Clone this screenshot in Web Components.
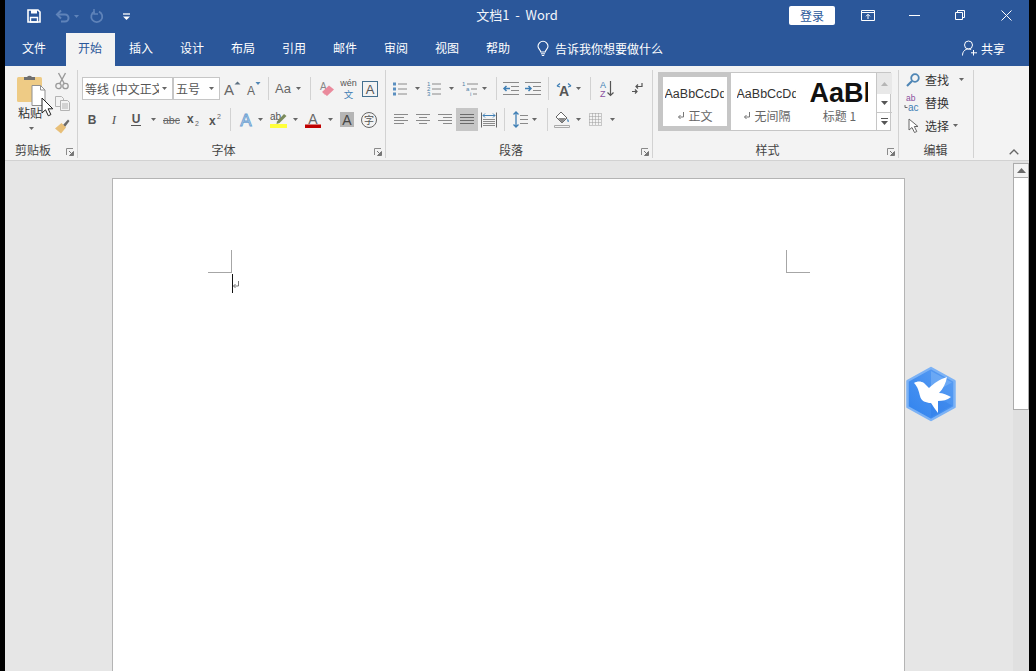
<!DOCTYPE html>
<html lang="zh">
<head>
<meta charset="utf-8">
<title>文档1 - Word</title>
<style>
html,body{margin:0;padding:0;background:#000;overflow:hidden}
body{font-family:"Noto Sans CJK SC","Liberation Sans",sans-serif}
</style>
</head>
<body>
<x-app>
  <x-title-bar title-text="文档1  -  Word"></x-title-bar>
  <x-tab-bar></x-tab-bar>
  <x-ribbon>
    <x-group w="73" label="剪贴板" launcher>
      <x-clipboard></x-clipboard>
    </x-group>
    <x-group w="308" label="字体" launcher>
      <x-row pad="4">
        <x-combo w="91" text="等线 (中文正文)"></x-combo>
        <x-combo w="47" text="五号"></x-combo>
        <x-tool w="24" i="grow"></x-tool><x-tool w="20" i="shrink"></x-tool>
        <x-sep w="8" x="4"></x-sep>
        <x-tool w="24" i="case"></x-tool><x-tool w="4" i="dd"></x-tool>
        <x-sep w="20" x="10"></x-sep>
        <x-tool w="14" i="eraser"></x-tool><x-tool w="28" i="wen"></x-tool><x-tool w="16" i="abox"></x-tool>
      </x-row>
      <x-row pad="3" second>
        <x-tool w="22" i="bold"></x-tool><x-tool w="22" i="italic"></x-tool><x-tool w="22" i="under"></x-tool><x-tool w="12" i="dd"></x-tool>
        <x-tool w="24" i="strike"></x-tool><x-tool w="21" i="sub"></x-tool><x-tool w="22" i="sup"></x-tool>
        <x-sep w="11" x="4"></x-sep>
        <x-tool w="18" i="effect"></x-tool><x-tool w="11" i="dd"></x-tool>
        <x-tool w="26" i="hilite"></x-tool><x-tool w="7" i="dd"></x-tool>
        <x-tool w="28" i="fcolor"></x-tool><x-tool w="6" i="dd"></x-tool>
        <x-tool w="28" i="shade"></x-tool><x-tool w="16" i="enclose"></x-tool>
      </x-row>
    </x-group>
    <x-group w="267" label="段落" launcher>
      <x-row pad="4">
        <x-tool w="20" i="bullets"></x-tool><x-tool w="14" i="dd"></x-tool>
        <x-tool w="20" i="numbers"></x-tool><x-tool w="14" i="dd"></x-tool>
        <x-tool w="24" i="multi"></x-tool><x-tool w="4" i="dd"></x-tool>
        <x-sep w="17" x="10"></x-sep>
        <x-tool w="16" i="outdent"></x-tool><x-tool w="28" i="indent"></x-tool>
        <x-sep w="9" x="1"></x-sep>
        <x-tool w="16" i="asian"></x-tool><x-tool w="12" i="dd"></x-tool>
        <x-sep w="14" x="6"></x-sep>
        <x-tool w="18" i="sort"></x-tool><x-tool w="12"></x-tool><x-tool w="18" i="marks"></x-tool>
      </x-row>
      <x-row pad="4" second>
        <x-tool w="22" i="al"></x-tool><x-tool w="22" i="ac"></x-tool><x-tool w="22" i="ar"></x-tool>
        <x-tool w="22" i="aj" active></x-tool><x-tool w="22" i="ad"></x-tool>
        <x-sep w="9" x="4"></x-sep>
        <x-tool w="22" i="spacing"></x-tool><x-tool w="6" i="dd"></x-tool>
        <x-sep w="14" x="10"></x-sep>
        <x-tool w="22" i="bucket"></x-tool><x-tool w="10" i="dd"></x-tool>
        <x-tool w="24" i="borders"></x-tool><x-tool w="10" i="dd"></x-tool>
      </x-row>
    </x-group>
    <x-group w="246" label="样式" launcher>
      <x-gallery>
        <x-style-item selected name="正文" mark preview="AaBbCcDd"></x-style-item>
        <x-style-item name="无间隔" mark preview="AaBbCcDd"></x-style-item>
        <x-style-item heading name="标题 1" preview="AaBbC"></x-style-item>
      </x-gallery>
    </x-group>
    <x-group w="75" label="编辑">
      <x-edit-list>
        <x-edit-item i="find" text="查找" gap="8"></x-edit-item>
        <x-edit-item i="replace" text="替换"></x-edit-item>
        <x-edit-item i="select" text="选择" gap="2"></x-edit-item>
      </x-edit-list>
    </x-group>
    <x-collapse></x-collapse>
  </x-ribbon>
  <x-doc-area>
    <x-page></x-page>
    <x-scrollbar></x-scrollbar>
    <x-bird></x-bird>
  </x-doc-area>
</x-app>

<script>
const LS='font-family="Liberation Sans"', CJK='font-family="Noto Sans CJK SC"';
const L='#8a8a8a';
const lines=(ys,x1,x2,c=L)=>ys.map(y=>`<path d="M${x1} ${y}H${x2}" stroke="${c}" stroke-width="1"/>`).join('');
const dots=(ys,x)=>ys.map(y=>`<rect x="${x}" y="${y-1.5}" width="3" height="3" fill="#5b8fc0"/>`).join('');
const ICONS={
  dd:[5,3,`<path d="M0 0h5L2.5 3z" fill="#666"/>`],
  save:[14,14,`<path d="M1 1h10l2 2v10H1z" fill="none" stroke="#fff" stroke-width="1.6"/><path d="M4 1h6v3.5H4z" fill="#fff"/><path d="M3.5 8.5h7V13h-7z" fill="none" stroke="#fff" stroke-width="1.4"/>`],
  undo:[14,12,`<path d="M2 4.5h7a3.5 3.5 0 0 1 0 7H5" fill="none" stroke="#5f83b9" stroke-width="2"/><path d="M5 .5 1 4.5l4 4" fill="none" stroke="#5f83b9" stroke-width="2"/>`],
  ddim:[5,3,`<path d="M0 0h5L2.5 3z" fill="#5f83b9"/>`],
  redo:[14,14,`<path d="M9 2.6a5.5 5.5 0 1 1-4.5 0" fill="none" stroke="#5f83b9" stroke-width="1.8"/><path d="M4 0v5h4" fill="none" stroke="#5f83b9" stroke-width="1.5"/>`],
  custom:[7,7,`<path d="M0 1h7" stroke="#fff" stroke-width="1.3"/><path d="M0 3.5h7L3.5 7z" fill="#fff"/>`],
  rdisp:[14,11,`<path d="M.5.5h13v10H.5zM.5 2.5h13" fill="none" stroke="#fff"/><path d="M7 9V4.5M5 6.3 7 4.3l2 2" fill="none" stroke="#fff"/>`],
  min:[11,1,`<path d="M0 .5h11" stroke="#fff"/>`],
  restore:[10,10,`<path d="M.5 2.5h7v7h-7zM2.5 2.5v-2h7v7h-2" fill="none" stroke="#fff"/>`],
  close:[11,11,`<path d="M.5.5l10 10M10.500.5l-10 10" stroke="#fff"/>`],
  bulb:[12,15,`<path d="M3.800 11c0-2-2.800-3-2.800-5.700a5 5 0 0 1 10 0C11 8 8.200 9 8.200 11z" fill="none" stroke="#fff" stroke-width="1.100"/><path d="M4 12.800h4M4.800 14.500h2.400" stroke="#fff"/>`],
  share:[15,16,`<circle cx="6.500" cy="5" r="4" fill="none" stroke="#fff"/><path d="M.5 15.500c0-4 2.500-6.500 6-6.500 1 0 2 .2 2.700.6" fill="none" stroke="#fff"/><path d="M11.500 10v5.500M9 12.800h6" stroke="#fff"/>`],
  paste:[30,33,`<rect x="1" y="4" width="25" height="25" rx="1.500" fill="#eecb85"/><path d="M8 7V4h3a3 3 0 0 1 5 0h3v3z" fill="#6f6f6f"/><path d="M16 12.500h8.500l4.500 4.500v15.500H16z" fill="#fff" stroke="#8f8f8f"/><path d="M24.500 12.500V17H29" fill="none" stroke="#8f8f8f"/>`],
  cut:[14,18,`<path d="M3.500 1l6 11M10.500 1l-6 11" stroke="#9a9a9a" stroke-width="1.400"/><circle cx="3.500" cy="14" r="2.700" fill="none" stroke="#9a9a9a" stroke-width="1.300"/><circle cx="10.500" cy="14" r="2.700" fill="none" stroke="#9a9a9a" stroke-width="1.300"/>`],
  copy:[15,15,`<path d="M.5.500h6l2 2v8H.5z" fill="#f3f3f3" stroke="#b3b3b3"/><path d="M5.500 4.500h7l2 2v8h-9z" fill="#f3f3f3" stroke="#b3b3b3"/>${lines([8,10,12],7,13,'#b3b3b3')}`],
  brush:[16,15,`<path d="M9 6 14 .5l1.500 1.500L11 8z" fill="#6a6a6a"/><path d="M7.500 4 12 8.500 7 14.500 1 9.500z" fill="#e8bf78"/>`],
  launch:[8,8,`<path d="M.5 7V.5H7" fill="none" stroke="#8a8a8a"/><path d="M3 3l3.500 3.500M7.500 3.500v4h-4z" stroke="#777" fill="#777"/>`],
  grow:[17,16,`<text x="0" y="13.500" font-size="15" fill="#666" ${LS}>A</text><path d="M10.500 3.500 13.500.5l3 3z" fill="#5c6f80"/>`],
  shrink:[14,15,`<text x="0" y="13.500" font-size="12" fill="#666" ${LS}>A</text><path d="M8.500 1h5l-2.500 3z" fill="#4f86b5"/>`],
  case:[18,14,`<text x="0" y="10.500" font-size="13" fill="#666" ${LS}>Aa</text>`],
  eraser:[16,16,`<text x="1" y="9" font-size="10" fill="#888" ${LS}>A</text><path d="M3 11 10 4.500l5 4-7 6.500z" fill="#ea8a9c"/><path d="M3 11l3 3" stroke="#f5c8d0"/>`],
  wen:[17,19,`<text x="8.500" y="7" text-anchor="middle" font-size="9" fill="#555" ${LS}>wén</text><text x="8.500" y="18.500" text-anchor="middle" font-size="9.500" fill="#3f7fb5" ${CJK}>文</text>`],
  abox:[16,16,`<rect x=".5" y=".5" width="15" height="15" fill="none" stroke="#44708f"/><text x="8" y="13" text-anchor="middle" font-size="13" fill="#555" ${LS}>A</text>`],
  bold:[10,12,`<text x="5" y="10" text-anchor="middle" font-size="12" font-weight="700" fill="#555" ${LS}>B</text>`],
  italic:[8,12,`<text x="4" y="10" text-anchor="middle" font-size="13" font-style="italic" fill="#555" font-family="Liberation Serif">I</text>`],
  under:[10,14,`<text x="5" y="10" text-anchor="middle" font-size="12" font-weight="700" fill="#555" ${LS}>U</text><path d="M0 12.500h10" stroke="#555"/>`],
  strike:[17,12,`<text x="8.500" y="10" text-anchor="middle" font-size="10.500" fill="#666" ${LS}>abc</text><path d="M0 6.500h17" stroke="#666"/>`],
  sub:[13,13,`<text x="0" y="10" font-size="12" font-weight="700" fill="#555" ${LS}>x</text><text x="8" y="13" font-size="7" fill="#666" ${LS}>2</text>`],
  sup:[13,13,`<text x="0" y="12" font-size="12" font-weight="700" fill="#555" ${LS}>x</text><text x="8" y="6" font-size="7" fill="#666" ${LS}>2</text>`],
  effect:[16,16,`<text x="8" y="14" text-anchor="middle" font-size="17" fill="#dfeaf6" stroke="#6da1d2" stroke-width=".9" ${LS}>A</text>`],
  hilite:[18,17,`<text x="0" y="9" font-size="10" fill="#555" ${LS}>ab</text><path d="M7 10.500 14 3l2.500 2-7 7-3 1z" fill="#7a8a5a"/><rect x="0" y="13" width="17" height="4" fill="#ffff3a"/>`],
  fcolor:[16,16,`<text x="8" y="11.500" text-anchor="middle" font-size="14" fill="#666" ${LS}>A</text><rect x="0" y="12.500" width="16" height="3.500" fill="#c00000"/>`],
  shade:[14,15,`<rect width="14" height="15" fill="#b5b5b5"/><text x="7" y="13" text-anchor="middle" font-size="14" fill="#444" ${LS}>A</text>`],
  enclose:[16,16,`<circle cx="8" cy="8" r="7.500" fill="none" stroke="#666"/><text x="8" y="12" text-anchor="middle" font-size="10" fill="#555" ${CJK}>字</text>`],
  bullets:[14,14,`${dots([2,7,12],0)}${lines([2,7,12],5,14)}`],
  numbers:[14,15,`<g font-size="6" fill="#4f7fa8" ${LS}><text x="0" y="5">1</text><text x="0" y="10">2</text><text x="0" y="15">3</text></g>${lines([3,8,13],5,14)}`],
  multi:[16,15,`<g font-size="6" fill="#4f7fa8" ${LS}><text x="0" y="5">1</text><text x="4" y="10">a</text><text x="8" y="15">i</text></g>${lines([3],5,16)}${lines([8],9,15)}${lines([13],11,15)}`],
  outdent:[16,13,`${lines([.5,12.500],0,16)}${lines([4.500,8.500],8,16)}<path d="M7 6.500H1M3.500 4 1 6.500 3.500 9" fill="none" stroke="#3f7fb5" stroke-width="1.500"/>`],
  indent:[16,13,`${lines([.5,12.500],0,16)}${lines([4.500,8.500],8,16)}<path d="M0 6.500h6M3.500 4 6 6.500 3.500 9" fill="none" stroke="#3f7fb5" stroke-width="1.500"/>`],
  asian:[16,14,`<text x="8" y="13.500" text-anchor="middle" font-size="14" font-weight="700" fill="#555" ${LS}>A</text><path d="M1 4l3-2.500M1 4l3 1M15 4l-3-2.500M15 4l-3 1" stroke="#3f7fb5" stroke-width="1.300" fill="none"/>`],
  sort:[14,17,`<text x="0" y="8" font-size="9" fill="#3f7fb5" ${LS}>A</text><text x="0" y="17" font-size="9" fill="#8a4f9e" ${LS}>Z</text><path d="M10.500 1v14M7.500 12.500l3 3 3-3" fill="none" stroke="#555" stroke-width="1.200"/>`],
  marks:[11,13,`<path d="M10 1v3.500H4M6 2.500 4 4.500l2 2" fill="none" stroke="#555" stroke-width="1.200"/><path d="M0 9.500h5M3 7.500l2 2-2 2" fill="none" stroke="#555" stroke-width="1.200"/>`],
  al:[14,11,lines([.5,6.500],0,14)+lines([3.500,9.500],0,10)],
  ac:[14,11,lines([.5,6.500],0,14)+lines([3.500,9.500],3,11)],
  ar:[14,11,lines([.5,6.500],0,14)+lines([3.500,9.500],5,14)],
  aj:[14,11,lines([.5,3.500,6.500,9.500],0,14,'#6a6a6a')],
  ad:[16,16,`<path d="M.5.5v15M15.500.5v15" stroke="#666"/>${lines([7.500,9.500,11.500,13.500],2,14)}<path d="M2 3.500h12M4 1.500l-2 2 2 2M12 1.500l2 2-2 2" fill="none" stroke="#3f7fb5"/>`],
  spacing:[15,17,`${lines([4.500,8.500,12.500],7,15)}<path d="M3 1v15M.5 3.500 3 1l2.500 2.500M.5 13.500 3 16l2.500-2.500" fill="none" stroke="#3f7fb5" stroke-width="1.300"/>`],
  bucket:[16,17,`<path d="M7 1l6 6-5 5-6-6z" fill="#fff" stroke="#666"/><path d="M4 7h8l-4 5z" fill="#8a8a8a"/><path d="M13.500 7.500c1 1.500 2 3 .9 3.500-1.400 0-1.200-2-.9-3.500z" fill="#3f7fb5"/><path d="M.5 14.500h15v2H.5z" fill="#f3f3f3" stroke="#aaa"/>`],
  borders:[13,13,`<path d="M.5.5h12v12H.5zM3.500.5v12M6.500.5v12M9.500.5v12M.5 3.500h12M.5 6.500h12M.5 9.500h12" fill="none" stroke="#9a9a9a" stroke-dasharray="1 1"/>`],
  find:[14,14,`<circle cx="9" cy="5" r="3.800" fill="none" stroke="#4f86b5" stroke-width="1.800"/><path d="M6 8 1 13" stroke="#4f86b5" stroke-width="2.200"/>`],
  replace:[16,17,`<text x="1" y="7" font-size="8.500" fill="#8a4f9e" ${LS}>ab</text><text x="3" y="16.500" font-size="10" fill="#3f7fb5" ${LS}>ac</text><path d="M0 11v2.500h2.500" fill="none" stroke="#666"/>`],
  select:[11,16,`<path d="M1 1v11l3-2.500 2.500 5 2.300-1-2.500-5H10z" fill="#fff" stroke="#666"/>`],
  chev:[10,6,`<path d="M.7 5.300 5 1l4.300 4.300" fill="none" stroke="#666" stroke-width="1.300"/>`],
  para:[8,8,`<path d="M6.500 0v5H1.500M3.500 3 1.500 5l2 2" fill="none" stroke="#777"/>`],
  up:[9,5,`<path d="M0 5 4.500 0 9 5z" fill="#6a6a6a"/>`],
  dn:[7,4,`<path d="M0 0h7L3.500 4z" fill="#555"/>`],
  more:[7,7,`<path d="M0 .5h7" stroke="#555"/><path d="M0 3h7L3.500 7z" fill="#555"/>`],
  upg:[7,4,`<path d="M0 4h7L3.500 0z" fill="#b5b5b5"/>`],
};
const icon=n=>{const d=ICONS[n];return d?`<svg width="${d[0]}" height="${d[1]}" viewBox="0 0 ${d[0]} ${d[1]}" style="display:block;flex:none;overflow:visible">${d[2]}</svg>`:''};

class Base extends HTMLElement{
  connectedCallback(){ if(this.shadowRoot) return; this.attachShadow({mode:'open'}).innerHTML=this.render(); }
  a(n,d=''){return this.hasAttribute(n)?this.getAttribute(n):d}
}
const def=(n,render)=>customElements.define(n,class extends Base{render(){return render.call(this)}});

def('x-app',()=>`<style>:host{display:flex;flex-direction:column;box-sizing:content-box;width:1024px;height:671px;margin-left:5px;background:#e6e6e6;overflow:hidden;position:relative}</style><slot></slot>`);

def('x-title-bar',function(){return `<style>
:host{display:grid;grid-template-columns:1fr auto 1fr;height:33px;background:#2b579a;color:#fff;align-items:center}
.l,.r{display:flex;align-items:center;height:100%}.r{justify-content:flex-end}
.l{padding-left:14px}
.b{display:flex;align-items:center;justify-content:center;height:100%}
.t{font-size:13px;white-space:pre;line-height:33px;margin-top:-5px;color:#f2f5fa}
.login{width:46px;height:19px;background:#fff;border-radius:2px;color:#2b579a;font-size:12px;line-height:19px;text-align:center;margin-right:10px;margin-top:-3px}
.w{width:46px}.m{margin-top:-3px}.n{margin-top:-1px}
</style>
<div class="l">
<div class="b n" style="width:30px">${icon('save')}</div>
<div class="b n" style="width:20px;margin-left:4px">${icon('undo')}</div>
<div class="b n" style="width:6px">${icon('ddim')}</div>
<div class="b n" style="width:22px;margin-left:7px">${icon('redo')}</div>
<div class="b n" style="width:22px;margin-left:7px">${icon('custom')}</div>
</div>
<div class="t">${this.a('title-text')}</div>
<div class="r"><div class="login">登录</div>
<div class="b w m">${icon('rdisp')}</div><div class="b w m">${icon('min')}</div><div class="b w m">${icon('restore')}</div><div class="b w m">${icon('close')}</div></div>`});

def('x-tab-bar',()=>{
 const tabs=['插入','设计','布局','引用','邮件','审阅','视图','帮助'].map(t=>`<div class="tab">${t}</div>`).join('');
 return `<style>
:host{display:flex;height:33px;background:#2b579a;color:#fff;font-size:12px;padding-left:5px;align-items:stretch}
.tab{box-sizing:border-box;width:49px;padding-right:1px;line-height:29px;text-align:center;margin-right:2px;flex:none}
.file{margin-right:7px}
.on{background:#f3f3f3;color:#2b579a}
.tell{display:flex;align-items:center;gap:6px;margin-left:12px;padding-bottom:3px}
.sp{flex:1}
.share{display:flex;align-items:center;gap:5px;margin-right:24px;padding-bottom:3px}
.share svg{margin-right:0;position:relative;left:1px}
</style><div class="tab file">文件</div><div class="tab on">开始</div>${tabs}
<div class="tell">${icon('bulb')}<span>告诉我你想要做什么</span></div><div class="sp"></div>
<div class="share">${icon('share')}<span>共享</span></div>`});

def('x-ribbon',()=>`<style>:host{display:flex;height:94px;background:#f3f3f3;border-bottom:1px solid #d2d2d2;flex:none}</style><slot></slot>`);

def('x-group',function(){return `<style>
:host{display:flex;flex-direction:column;box-sizing:border-box;width:${this.a('w')}px;margin-top:4px;height:88px;border-right:1px solid #d2d2d2;flex:none}
.body{height:72px;flex:none}
.foot{display:flex;height:16px}
.lb{flex:1;text-align:center;font-size:12px;line-height:16px;color:#444;padding-right:1px}
.ln{width:15px;display:flex;align-items:center;justify-content:center;padding-top:3px}
</style><div class="body"><slot></slot></div><div class="foot"><div class="lb">${this.a('label')}</div>${this.hasAttribute('launcher')?`<div class="ln">${icon('launch')}</div>`:''}</div>`});

def('x-row',function(){const s=this.hasAttribute('second');return `<style>:host{display:flex;height:23px;align-items:center;padding-left:${this.a('pad','0')}px;margin-top:${s?8:7}px}</style><slot></slot>`});

def('x-tool',function(){return `<style>:host{display:flex;align-items:center;justify-content:center;flex:none;width:${this.a('w')}px;height:23px;${this.hasAttribute('active')?'background:#c6c6c6;':''}}</style>${icon(this.a('i'))}`});

def('x-sep',function(){return `<style>:host{display:block;flex:none;box-sizing:border-box;width:${this.a('w')}px;height:23px;padding-left:${this.a('x')}px}i{display:block;width:1px;height:100%;background:#d2d2d2}</style><i></i>`});

def('x-combo',function(){return `<style>:host{display:flex;align-items:center;box-sizing:border-box;flex:none;width:${this.a('w')}px;height:23px;background:#fff;border:1px solid #c6c6c6;padding:0 5px 0 2px;font-size:12px;color:#555;gap:3px}
span{flex:1;overflow:hidden;white-space:nowrap;min-width:0;line-height:21px}</style><span>${this.a('text')}</span>${icon('dd')}`});

def('x-clipboard',()=>`<style>
:host{display:flex;margin-top:3px;position:relative}
.p{width:50px;display:flex;flex-direction:column;align-items:center;flex:none}
.p svg{margin-left:2px}
.t{font-size:12px;line-height:15px;color:#333;margin-top:-1px}
.d{margin-top:7px}
.s{width:14px;display:flex;flex-direction:column;align-items:center;flex:none;margin-top:-4px}
.s div{height:23px;display:flex;align-items:center}
.c{position:absolute;left:36px;top:24px}
</style><div class="p">${icon('paste')}<div class="t">粘贴</div><div class="d">${icon('dd')}</div></div>
<div class="s"><div>${icon('cut')}</div><div>${icon('copy')}</div><div>${icon('brush')}</div></div>
<svg class="c" width="13" height="20" viewBox="0 0 13 20" style="overflow:visible"><path d="M1 1v15l3.500-3.200 2.800 6 2.600-1.200-2.800-5.800h4.700z" fill="#fff" stroke="#222"/></svg>`);

def('x-gallery',()=>`<style>
:host{display:flex;box-sizing:border-box;width:233px;height:59px;margin:2px 0 0 5px;background:#fff;border:1px solid #c6c6c6}
.sb{width:15px;display:flex;flex-direction:column;border-left:1px solid #c6c6c6;flex:none;margin-left:auto}
.sb div{display:flex;align-items:center;justify-content:center;box-sizing:border-box}
.u{height:21px;background:#e8e8e8}.n{height:19px;border-bottom:1px solid #c6c6c6}.m{flex:1}
</style><slot></slot><div class="sb"><div class="u">${icon('upg')}</div><div class="n">${icon('dn')}</div><div class="m">${icon('more')}</div></div>`);

def('x-style-item',function(){
 const sel=this.hasAttribute('selected'),h=this.hasAttribute('heading');
 return `<style>
:host{display:flex;flex-direction:column;align-items:center;box-sizing:border-box;flex:none;width:${sel?72:h?73:72}px;height:57px;${sel?'border:4px solid #c6c6c6;':''}padding-top:${sel?7:11}px}
.pv{width:${h?58:59}px;margin-left:-2px;overflow:hidden;white-space:nowrap;height:${h?30:20}px;line-height:${h?30:20}px;font-family:"Liberation Sans",sans-serif;font-size:${h?27:12.5}px;font-weight:${h?700:400};color:${h?'#111':'#333'};${h?'margin-top:-6px;':''}}
.nm{display:flex;align-items:center;gap:3px;font-size:12px;line-height:16px;color:#666;margin-top:${h?0:4}px}
</style><div class="pv">${this.a('preview')}</div><div class="nm">${this.hasAttribute('mark')?icon('para'):''}<span>${this.a('name')}</span></div>`});

def('x-edit-list',()=>`<style>:host{display:flex;flex-direction:column;margin-top:-2px;padding-left:7px}</style><slot></slot>`);
def('x-edit-item',function(){return `<style>:host{display:flex;align-items:center;height:23px;font-size:12px;color:#333}
.i{width:14px;display:flex;justify-content:center;margin-right:5px;flex:none}</style><div class="i">${icon(this.a('i'))}</div><span>${this.a('text')}</span>${this.hasAttribute('gap')?`<div style="margin-left:${this.a('gap')*1+2}px">${icon('dd')}</div>`:''}`});

def('x-collapse',()=>`<style>:host{flex:1;display:flex;justify-content:flex-end;align-items:flex-end;padding:0 10px 5px 0}</style>${icon('chev')}`);

def('x-doc-area',()=>`<style>:host{display:flex;flex:1;min-height:0;position:relative;overflow:hidden;background:#e6e6e6}</style><slot></slot>`);

def('x-page',()=>`<style>
:host{display:block;box-sizing:border-box;width:793px;height:1120px;margin:17px 0 0 107px;background:#fff;border:1px solid #b4b4b4;padding:71px 94px 0 95px;flex:none}
.marks{display:flex;justify-content:space-between}
.cm{width:24px;height:23px;box-sizing:border-box;border-bottom:1px solid #a6a6a6}
.cm.a{border-right:1px solid #a6a6a6}.cm.b{border-left:1px solid #a6a6a6}
.line{display:flex;margin:1px 0 0 24px;height:19px}
.caret{width:1px;height:19px;background:#111}
.mk{margin:7px 0 0 -1px}
</style><div class="marks"><div class="cm a"></div><div class="cm b"></div></div>
<div class="line"><div class="caret"></div><div class="mk">${icon('para')}</div></div>`);

def('x-scrollbar',()=>`<style>
:host{display:flex;flex-direction:column;flex:none;box-sizing:border-box;width:16px;margin-left:auto;margin-right:0;padding-top:2px;background:#e0e0e0}
.u{height:15px;display:flex;align-items:center;justify-content:center;background:#f3f3f3;border:1px solid #ababab;box-sizing:border-box}
.th{height:232px;background:#fff;border:1px solid #ababab;border-top:0;box-sizing:border-box}
</style><div class="u">${icon('up')}</div><div class="th"></div>`);

def('x-bird',()=>`<style>:host{position:absolute;left:900px;top:205px;width:52px;height:56px;display:block}</style>
<svg width="52" height="56" viewBox="0 0 52 56"><defs><linearGradient id="g" x1="0" y1="1" x2="1" y2="0"><stop offset="0" stop-color="#2f82ee"/><stop offset="1" stop-color="#5d9ff3"/></linearGradient></defs>
<path d="M26 2 49.500 15v26L26 54 2.500 41V15z" fill="url(#g)" stroke="#7cb2f5" stroke-width="2.500" stroke-linejoin="round"/>
<path d="M26 5 47 16.500 26 28z" fill="#86b9f7" opacity=".5"/>
<path d="M26 51 47 39.500 26 28z" fill="#2a78e6" opacity=".35"/>
<path d="M9 17C12 15 16 15 19 17L24 22C28 18 35 13 42 11 41 17 38 23 34 27 38 27 42 29 46 31 42 34 38 35 33 35 33 39 33 43 33 47 30 43 28 40 26 37 21 37 16 35 15 30 14 26 13 21 9 17z" fill="#fff"/></svg>`);
</script>
</body>
</html>
